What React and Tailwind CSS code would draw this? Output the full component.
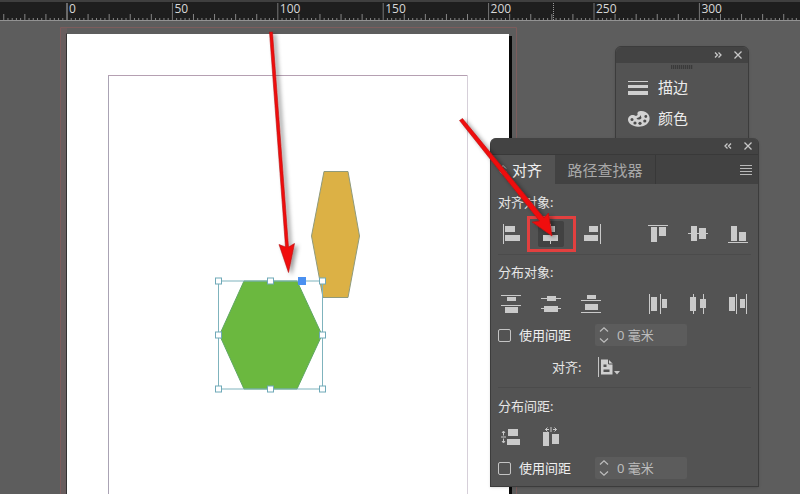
import React, { useState } from "react";

const MAJOR = 105.4;
const ORIGIN = 67;

function Ruler() {
  const ticks = [];
  for (let i = -16; i < 180; i++) {
    const x = ORIGIN + (i * MAJOR) / 25;
    const major = i % 25 === 0;
    const mid = i % 5 === 0;
    ticks.push(
      <line
        key={i}
        x1={x}
        x2={x}
        y1={major ? 3 : mid ? 14 : 18}
        y2="20"
        stroke={i === 0 ? "#b5b5b5" : major ? "#777" : "#858585"}
        strokeWidth="1"
      />
    );
  }
  return (
    <header className="h-[21px] shrink-0 overflow-hidden border-b border-b-[#929292] bg-[#1e1e1e]">
      <svg width="2400" height="20" viewBox="0 0 2400 20" aria-label="标尺">
        <rect width="2400" height="2" fill="#3f3f3f" />
        {ticks}
        <line x1="553.5" x2="553.5" y1="3" y2="20" stroke="#999" strokeDasharray="1 1" />
        {[0, 50, 100, 150, 200, 250, 300].map((n, i) => (
          <text key={n} x={ORIGIN + 2 + i * MAJOR} y="13" fontSize="12" fill="#d8d8d8" fontFamily="'Open Sans', 'Noto Sans', sans-serif">
            {n}
          </text>
        ))}
      </svg>
    </header>
  );
}

const handles = [
  [218, 281], [270, 281], [322, 281],
  [218, 335], [322, 335],
  [218, 389], [270, 389], [322, 389],
];

function Artwork() {
  return (
    <svg className="absolute left-0 top-0 h-full w-full" viewBox="0 21 800 473" preserveAspectRatio="xMinYMin slice" aria-hidden="true">
      <rect x="60" y="28" width="7" height="600" fill="#685d5e" />
      <path d="M60.5 600V27.5H516.5V600" fill="none" stroke="#7d5c5c" />
      <path d="M66.5 600V33.5" stroke="#333" />
      <rect x="69" y="36" width="443" height="600" fill="#080808" />
      <rect x="67" y="34" width="442" height="600" fill="#fff" />
      <path d="M108.5 600V75.5" fill="none" stroke="#aaa3b4" />
      <path d="M108 75.5H467.5" fill="none" stroke="#b5a0b2" />
      <path d="M467.5 76V600" fill="none" stroke="#d6cfd9" />
      <path d="M324 171.500H348L359.500 236L348 297.500H323L311.500 236Z" fill="#dcb145" stroke="#8f9a7c" strokeWidth="1" />
      <path d="M244 281H297L322 335L297 389H244L219.500 335Z" fill="#6bb83f" stroke="#5fa763" strokeWidth="1" />
      <rect x="218.500" y="281" width="104" height="108" fill="none" stroke="#7fb3bd" />
      {handles.map(([x, y]) => (
        <rect key={`${x}-${y}`} x={x - 2.5} y={y - 3} width="6" height="6" fill="#fff" stroke="#6fa9b8" />
      ))}
      <rect x="298" y="277" width="8" height="8" fill="#4a90f0" />
    </svg>
  );
}

function WindowControls({ glyph, label }) {
  return (
    <div className="flex h-4 items-center justify-end gap-3 rounded-t-md bg-[#434343] pr-[6px] text-[#c8c8c8]">
      <button type="button" aria-label={label}>
        <svg width="8" height="8" viewBox="0 0 8 8" fill="none" stroke="currentColor" strokeWidth="1.300">
          <path d={glyph} />
        </svg>
      </button>
      <button type="button" aria-label="关闭">
        <svg width="8" height="8" viewBox="0 0 8 8" fill="none" stroke="currentColor" strokeWidth="1.300">
          <path d="M0.500 0.500L7.500 7.500M7.500 0.500L0.500 7.500" />
        </svg>
      </button>
    </div>
  );
}

function DockPanel() {
  return (
    <section className="absolute left-[615px] top-[25px] h-[100px] w-[134px] rounded-t-md border border-[#3c3c3c] bg-[#535353] shadow">
      <WindowControls glyph="M1 1.500L3.500 4L1 6.500M4.500 1.500L7 4L4.500 6.500" label="展开面板" />
      <div className="mx-auto mt-[2px] h-1 w-[22px] bg-[repeating-linear-gradient(90deg,#3a3a3a_0_1px,#4c4c4c_1px_2px)]" />
      <div className="mt-[3px] flex flex-col pl-3 text-[15px] text-[#ececec]">
        <button type="button" className="flex h-[31px] items-center gap-[10px]">
          <svg width="20" height="20" viewBox="0 0 20 20" fill="#cfcfcf">
            <rect y="3" width="20" height="1" />
            <rect y="7" width="20" height="3" />
            <rect y="13" width="20" height="4" />
          </svg>
          描边
        </button>
        <button type="button" className="flex h-[31px] items-center gap-[10px]">
          <svg width="22" height="18" viewBox="0 0 22 18" className="-mr-[2px]">
            <path d="M9 5.500C10.500 4.500 8.500 3.500 10 2C11.500 .5 15 .6 17.500 2C21 3.800 22.300 7 21.300 10.500C20 14.500 15.500 17 10 16.700C4.500 16.400 0 13.500 0 9.800C0 6.500 3 4.500 5.500 5C7 5.300 7.500 6.500 9 5.500Z" fill="#d2d2d2" />
            <g fill="#4c4c4c">
              <circle cx="4" cy="9.500" r="1.500" />
              <circle cx="7" cy="13" r="1.600" />
              <circle cx="12" cy="13.300" r="1.600" />
              <circle cx="16.800" cy="11" r="1.600" />
              <circle cx="17.800" cy="6.500" r="1.400" />
              <path d="M8.500 8.500C10 7.500 12.500 7 12.500 5L13.500 8C12.500 9.800 9.500 10.200 8.500 8.500Z" />
            </g>
          </svg>
          颜色
        </button>
      </div>
    </section>
  );
}

/* Each icon is a list of [x, y, width, height] bars on a 20 x 20 grid. */
const ALIGN_H = [
  ["左对齐", [[2, 0, 1, 20], [4, 2, 10, 6], [4, 11, 15, 6]]],
  ["水平居中对齐", [[9, 0, 1, 20], [5, 2, 9, 6], [2, 11, 15, 6]]],
  ["右对齐", [[19, 0, 1, 20], [8, 2, 9, 6], [3, 11, 14, 6]]],
];
const ALIGN_V = [
  ["顶对齐", [[0, 1, 20, 1], [3, 3, 6, 15], [11, 3, 7, 9]]],
  ["垂直居中对齐", [[0, 9, 20, 1], [3, 2, 6, 15], [11, 4, 7, 11]]],
  ["底对齐", [[0, 18, 20, 1], [3, 2, 6, 15], [11, 8, 7, 9]]],
];
const DIST_V = [
  ["按顶分布", [[0, 1, 20, 1], [6, 3, 9, 4], [0, 11, 20, 1], [4, 13, 13, 6]]],
  ["垂直居中分布", [[0, 4, 20, 1], [6, 2, 9, 5], [0, 14, 20, 1], [3, 12, 14, 6]]],
  ["按底分布", [[6, 1, 9, 4], [0, 6, 20, 1], [4, 10, 13, 6], [0, 18, 20, 1]]],
];
const DIST_H = [
  ["按左分布", [[1, 0, 1, 20], [3, 3, 6, 14], [12, 0, 1, 20], [14, 5, 5, 9]]],
  ["水平居中分布", [[5, 0, 1, 20], [2, 3, 6, 14], [15, 0, 1, 20], [12, 5, 6, 9]]],
  ["按右分布", [[1, 3, 6, 14], [8, 0, 1, 20], [12, 5, 5, 9], [18, 0, 1, 20]]],
];

function IconButton({ name, bars, active, children }) {
  return (
    <button
      type="button"
      aria-label={name}
      className={`flex size-[26px] items-center justify-center rounded-xs ${active ? "bg-[#424242]" : ""}`}
    >
      <svg width="20" height="20" viewBox="0 0 20 20" fill="#cacaca">
        {bars.map(([x, y, w, h], i) => (
          <rect key={i} x={x} y={y} width={w} height={h} />
        ))}
        {children}
      </svg>
    </button>
  );
}

function IconRow({ left, right = [], active }) {
  return (
    <div className="flex justify-between">
      {[left, right].map((group, i) => (
        <div key={i} className="flex gap-[14px]">
          {group.map(([name, bars]) => (
            <IconButton key={name} name={name} bars={bars} active={name === active} />
          ))}
        </div>
      ))}
    </div>
  );
}

function SpacingRow({ id }) {
  const [on, setOn] = useState(false);
  const [value, setValue] = useState("0 毫米");
  return (
    <div className="flex h-[22px] items-center">
      <input
        id={id}
        type="checkbox"
        checked={on}
        onChange={(e) => setOn(e.target.checked)}
        className="size-[13px] shrink-0 appearance-none rounded-xs border border-[#c4c4c4] checked:bg-[#c4c4c4]"
      />
      <label htmlFor={id} className="w-[84px] shrink-0 pl-2 text-[#f0f0f0]">使用间距</label>
      <div className="flex h-[22px] w-[92px] items-center rounded-xs bg-[#5c5c5c] pl-1">
        <div className="flex w-[10px] flex-col gap-[6px] text-[#bdbdbd]">
          <button type="button" aria-label="增加">
            <svg className="block" width="10" height="5" viewBox="0 0 10 5" fill="none" stroke="currentColor" strokeWidth="1.200"><path d="M1 4.500L5 .8L9 4.500" /></svg>
          </button>
          <button type="button" aria-label="减少">
            <svg className="block" width="10" height="5" viewBox="0 0 10 5" fill="none" stroke="currentColor" strokeWidth="1.200"><path d="M1 .5L5 4.200L9 .5" /></svg>
          </button>
        </div>
        <input
          aria-label="间距"
          value={value}
          onChange={(e) => setValue(e.target.value)}
          className="w-full min-w-0 bg-transparent pl-2 text-[13px] text-[#bdbdbd] outline-none"
        />
      </div>
    </div>
  );
}

function AlignPanel() {
  return (
    <section className="absolute left-[490px] top-[117px] w-[269px] rounded-t-md border border-t-0 border-[#3c3c3c] bg-[#535353] text-[13px] leading-5 text-[#e6e6e6] shadow">
      <WindowControls glyph="M3.500 1.500L1 4L3.500 6.500M7 1.500L4.500 4L7 6.500" label="折叠面板" />
      <div role="tablist" className="flex h-[30px] items-stretch border-t border-[#393939] bg-[#424242] text-[15px]">
        <button type="button" role="tab" aria-selected="true" className="flex w-16 items-center gap-[5px] bg-[#535353] pl-2 text-[#f0f0f0]">
          <svg width="8" height="14" viewBox="0 0 8 14" fill="none" stroke="#c4c4c4"><path d="M1 5.500L4 2.500L7 5.500M1 8.500L4 11.500L7 8.500" /></svg>
          对齐
        </button>
        <button type="button" role="tab" aria-selected="false" className="w-[101px] border-r border-[#383838] text-[#a8a8a8]">路径查找器</button>
        <button type="button" aria-label="面板菜单" className="ml-auto pr-[6px]">
          <svg width="12" height="10" viewBox="0 0 12 10" fill="#b8b8b8"><path d="M0 0H12V1H0ZM0 3H12V4H0ZM0 6H12V7H0ZM0 9H12V10H0Z" /></svg>
        </button>
      </div>
      <div className="px-[7px]">
        <div className="h-[71px] border-b border-[#4b4b4b] pt-2">
          <h2 className="mb-[9px]">对齐对象:</h2>
          <IconRow left={ALIGN_H} right={ALIGN_V} active="水平居中对齐" />
        </div>
        <div className="h-[133px] border-b border-[#4b4b4b] pt-[7px]">
          <h2 className="mb-[9px]">分布对象:</h2>
          <IconRow left={DIST_V} right={DIST_H} />
          <div className="mt-[7px]"><SpacingRow id="use-distribute" /></div>
          <div className="mt-[9px] flex h-6 items-center justify-start pl-[54px]">
            <span className="mr-4">对齐:</span>
            <button type="button" aria-label="对齐选区">
              <svg width="23" height="22" viewBox="0 0 23 22">
                <path d="M1 1H2V21H1Z" fill="#c4c4c4" />
                <path d="M4 3.500H11.500L15.500 7.500V18.500H4Z" fill="#cfcfcf" />
                <path d="M11.500 3V8H16" fill="none" stroke="#535353" />
                <path d="M6.500 8.500H9.500V11H6.500ZM6.500 13.500H12.500V16H6.500Z" fill="#535353" />
                <path d="M17 15H23L20 18.500Z" fill="#c8c8c8" />
              </svg>
            </button>
          </div>
        </div>
        <div className="pb-[7px] pt-2">
          <h2 className="mb-2">分布间距:</h2>
          <div className="flex gap-[14px]">
            <IconButton name="垂直分布间距" bars={[[7, 2, 10, 7], [6, 12, 13, 6]]}>
              <path d="M2.500 4.500V8.500M2.500 11.500V15.500M0 10H5M1 6L2.500 4L4 6M1 14L2.500 16L4 14" fill="none" stroke="#cacaca" />
            </IconButton>
            <IconButton name="水平分布间距" bars={[[2, 5, 6, 14], [11, 7, 7, 10]]}>
              <path d="M4.500 2.500H8M12 2.500H15.500M10 0V5M6.500 .5L4.500 2.500L6.500 4.500M13.500 .5L15.500 2.500L13.500 4.500" fill="none" stroke="#cacaca" />
            </IconButton>
          </div>
          <div className="mt-[7px]"><SpacingRow id="use-spacing" /></div>
        </div>
      </div>
    </section>
  );
}

function Annotations() {
  return (
    <svg className="pointer-events-none absolute left-0 top-0" width="800" height="494" viewBox="0 0 800 494" aria-hidden="true">
      <defs>
        <filter id="drop" x="-50%" y="-20%" width="220%" height="140%">
          <feDropShadow dx="3" dy="2" stdDeviation="2" floodColor="#000" floodOpacity="0.4" />
        </filter>
      </defs>
      <rect x="528.500" y="217.500" width="46" height="33" fill="none" stroke="#e2403f" strokeWidth="3" />
      <g filter="url(#drop)" fill="#f00a0a" stroke="#b31515" strokeWidth="0.600">
        <path d="M269.500 32H272.500L288.500 247L294.500 243.500L288.500 272.500L279 244.500L285.500 247Z" />
        <path d="M462.500 118.500L544 218L548.500 213L552 236L532 222L539.500 221L459.500 120.500Z" />
      </g>
    </svg>
  );
}

export default function App() {
  return (
    <div className="relative flex h-screen w-full flex-col overflow-hidden bg-[#5d5d5d] font-['Noto_Sans','Noto_Sans_CJK_SC',sans-serif]">
      <Ruler />
      <main className="relative flex-1 overflow-hidden">
        <Artwork />
        <DockPanel />
        <AlignPanel />
      </main>
      <Annotations />
    </div>
  );
}
